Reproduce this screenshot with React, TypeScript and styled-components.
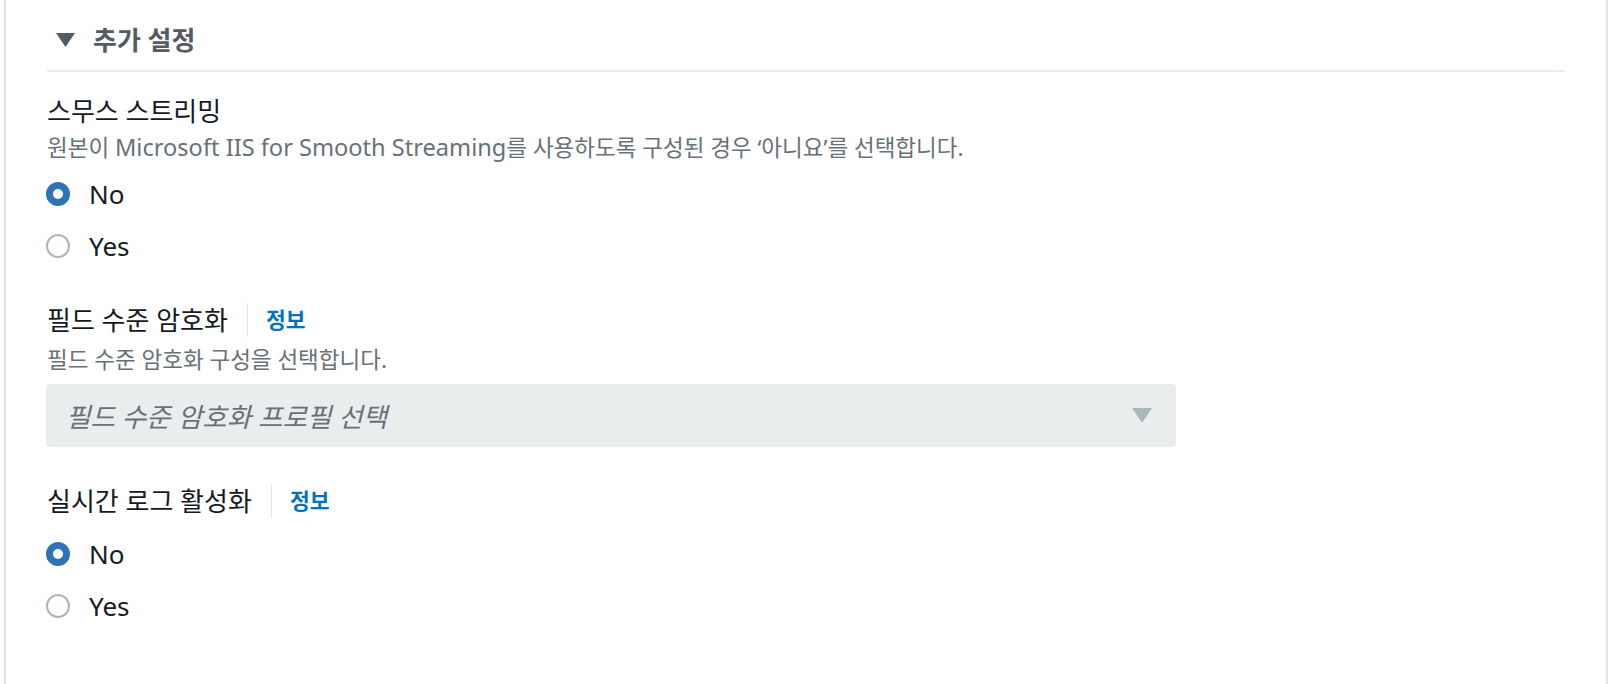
import React from "react";
import styled, { createGlobalStyle } from "styled-components";

const GlobalStyle = createGlobalStyle`
  html, body {
    margin: 0;
    padding: 0;
    background: #ffffff;
  }
  body {
    font-family: "Noto Sans", "Noto Sans CJK KR", sans-serif;
    color: #16191f;
  }
`;

const Panel = styled.section`
  box-sizing: border-box;
  margin-left: 4px;
  width: 1604px;
  min-height: 684px;
  border-left: 2px solid #dfe3e4;
  border-right: 2px solid #dfe3e4;
  padding: 24px 41px 0 41px;
`;

const Header = styled.div`
  display: flex;
  align-items: center;
  height: 32px;
  padding-left: 9px;
  gap: 18px;
  margin-bottom: 14px;
`;

const HeaderTitle = styled.h2`
  margin: 0;
  font-size: 26px;
  line-height: 32px;
  font-weight: 700;
  color: #545b64;
`;

const Divider = styled.div`
  height: 2px;
  background: #eaeded;
`;

const Fields = styled.div`
  display: flex;
  flex-direction: column;
  gap: 37px;
  padding-top: 22px;
`;

const Field = styled.div`
  display: flex;
  flex-direction: column;
`;

const LabelRow = styled.div`
  display: flex;
  align-items: center;
  height: 34px;
`;

const Label = styled.span`
  font-size: 26px;
  line-height: 34px;
  color: #16191f;
`;

const InfoSep = styled.span`
  align-self: stretch;
  width: 1px;
  background: #e4e7e8;
  margin: 0 18px 0 19px;
`;

const InfoLink = styled.a`
  font-size: 21.5px;
  line-height: 34px;
  font-weight: 700;
  color: #0073bb;
  text-decoration: none;
  cursor: pointer;
`;

const Description = styled.div<{ $gap: number }>`
  margin-top: ${(p) => p.$gap}px;
  font-size: 22.5px;
  line-height: 30px;
  height: 30px;
  color: #687078;
`;

const Latin = styled.span`
  font-size: 23.6px;
  line-height: 1;
`;

const RadioGroup = styled.div<{ $offset: number }>`
  display: flex;
  flex-direction: column;
  gap: 12px;
  margin-top: ${(p) => p.$offset}px;
`;

const RadioRow = styled.label`
  display: flex;
  align-items: center;
  gap: 19px;
  height: 40px;
  cursor: pointer;
`;

const RadioDot = styled.span<{ $checked: boolean }>`
  box-sizing: border-box;
  width: 24px;
  height: 24px;
  margin-left: -1px;
  border-radius: 50%;
  background: #ffffff;
  border: ${(p) => (p.$checked ? "7px solid #2e73b8" : "2px solid #aab7b8")};
  flex-shrink: 0;
`;

const RadioText = styled.span`
  font-size: 26px;
  line-height: 40px;
  color: #16191f;
`;

const SelectBox = styled.div`
  box-sizing: border-box;
  margin-top: 9px;
  margin-left: -1px;
  width: 1130px;
  height: 63px;
  border-radius: 4px;
  background: #eaeded;
  display: flex;
  align-items: center;
  justify-content: space-between;
  padding: 0 24px 0 20px;
`;

const Placeholder = styled.span`
  font-size: 26.6px;
  font-style: italic;
  color: #687078;
`;

const Triangle = ({ w, h, color }: { w: number; h: number; color: string }) => (
  <svg width={w} height={h} viewBox={`0 0 ${w} ${h}`}>
    <polygon points={`0,0 ${w},0 ${w / 2},${h}`} fill={color} />
  </svg>
);

const Radios = ({ offset, value }: { offset: number; value: string }) => (
  <RadioGroup $offset={offset}>
    {["No", "Yes"].map((opt) => (
      <RadioRow key={opt}>
        <RadioDot $checked={opt === value} />
        <RadioText>{opt}</RadioText>
      </RadioRow>
    ))}
  </RadioGroup>
);

export default function App() {
  return (
    <>
      <GlobalStyle />
      <Panel>
        <Header>
          <Triangle w={19} h={14} color="#545b64" />
          <HeaderTitle>추가 설정</HeaderTitle>
        </Header>
        <Divider />
        <Fields>
          <Field>
            <LabelRow>
              <Label>스무스 스트리밍</Label>
            </LabelRow>
            <Description $gap={5}>
              원본이 <Latin>Microsoft IIS for Smooth Streaming</Latin>를 사용하도록 구성된 경우 ‘아니요’를 선택합니다.
            </Description>
            <Radios offset={11} value="No" />
          </Field>
          <Field>
            <LabelRow>
              <Label>필드 수준 암호화</Label>
              <InfoSep />
              <InfoLink>정보</InfoLink>
            </LabelRow>
            <Description $gap={8}>필드 수준 암호화 구성을 선택합니다.</Description>
            <SelectBox>
              <Placeholder>필드 수준 암호화 프로필 선택</Placeholder>
              <Triangle w={20} h={15} color="#aab7b8" />
            </SelectBox>
          </Field>
          <Field>
            <LabelRow>
              <Label>실시간 로그 활성화</Label>
              <InfoSep />
              <InfoLink>정보</InfoLink>
            </LabelRow>
            <Radios offset={16} value="No" />
          </Field>
        </Fields>
      </Panel>
    </>
  );
}
